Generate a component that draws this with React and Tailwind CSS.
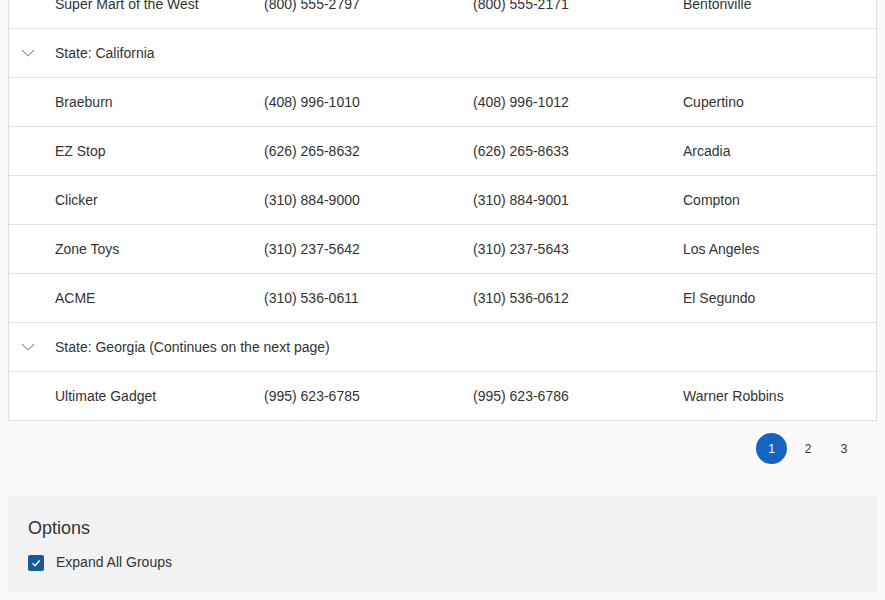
import React from "react";

const rowsBefore = [["Super Mart of the West", "(800) 555-2797", "(800) 555-2171", "Bentonville"]];
const ca = [
  ["Braeburn", "(408) 996-1010", "(408) 996-1012", "Cupertino"],
  ["EZ Stop", "(626) 265-8632", "(626) 265-8633", "Arcadia"],
  ["Clicker", "(310) 884-9000", "(310) 884-9001", "Compton"],
  ["Zone Toys", "(310) 237-5642", "(310) 237-5643", "Los Angeles"],
  ["ACME", "(310) 536-0611", "(310) 536-0612", "El Segundo"],
];
const ga = [["Ultimate Gadget", "(995) 623-6785", "(995) 623-6786", "Warner Robbins"]];

function Row({ r, last }) {
  return (
    <div className={`grid grid-cols-[46px_209px_209px_210px_1fr] items-center ${last ? "h-[48px]" : "h-[49px] border-b border-[#e0e0e0]"}`}>
      <div />
      {r.map((c, i) => (
        <div key={i} className="whitespace-nowrap">{c}</div>
      ))}
    </div>
  );
}

function Group({ title }) {
  return (
    <div className="flex h-[49px] items-center border-b border-[#e0e0e0]">
      <div className="w-[38px] flex justify-center">
        <svg width="14" height="8" viewBox="0 0 14 8" fill="none">
          <path d="M1 1.2 L7 6.8 L13 1.2" stroke="#8a8a8a" strokeWidth="1.1" />
        </svg>
      </div>
      <div className="ml-[8px]">{title}</div>
    </div>
  );
}

export default function App() {
  return (
    <div className="w-[885px] h-[600px] overflow-hidden bg-[#fafafa] text-[14px] text-[#333333]" style={{ fontFamily: "'Liberation Sans', Arial, sans-serif" }}>
      <div className="-mt-[20px] px-[8px]">
        <div className="w-[869px] bg-white border border-t-0 border-[#dddddd]">
          {rowsBefore.map((r, i) => <Row key={i} r={r} />)}
          <Group title="State: California" />
          {ca.map((r, i) => <Row key={i} r={r} />)}
          <Group title="State: Georgia (Continues on the next page)" />
          {ga.map((r, i) => <Row key={i} r={r} last />)}
        </div>
        <div className="flex justify-end items-center h-[55px] pr-[15px] text-[12px]">
          <div className="w-[31px] h-[31px] rounded-full bg-[#1565c0] text-white flex items-center justify-center">1</div>
          <div className="w-[36px] h-[31px] flex items-center justify-center ml-[3px]">2</div>
          <div className="w-[36px] h-[31px] flex items-center justify-center">3</div>
        </div>
        <div className="mt-[20px] w-[869px] h-[96px] bg-[#f2f2f2] pl-[20px] pt-[20px]">
          <div className="text-[18px] leading-[24px] text-[#333333]">Options</div>
          <div className="flex items-center mt-[12px]">
            <div className="w-[16px] h-[16px] rounded-[2px] bg-[#1a5a96] flex items-center justify-center">
              <svg width="12" height="12" viewBox="0 0 12 12" fill="none">
                <path d="M2.5 6.3 L5 8.7 L9.7 3.5" stroke="white" strokeWidth="1.3" />
              </svg>
            </div>
            <div className="ml-[12px]">Expand All Groups</div>
          </div>
        </div>
      </div>
    </div>
  );
}
